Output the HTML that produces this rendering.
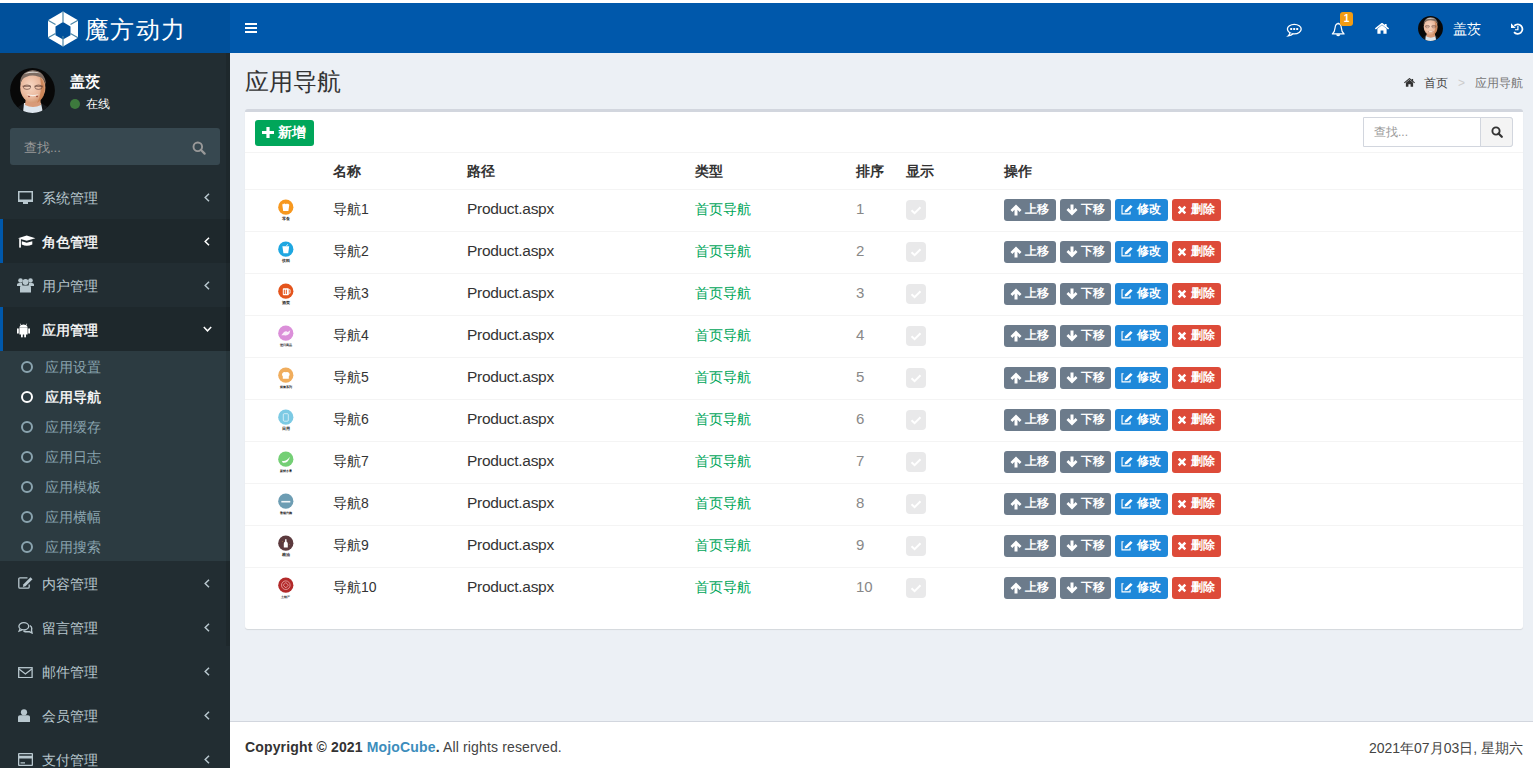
<!DOCTYPE html>
<html><head><meta charset="utf-8">
<style>
*{box-sizing:border-box;margin:0;padding:0}
html,body{width:1533px;height:768px;overflow:hidden}
body{background:#ecf0f5;font-family:"Liberation Sans",sans-serif;font-size:14px;color:#333;position:relative}
.abs{position:absolute}
#strip{left:0;top:0;width:1533px;height:3px;background:#fff}
#logo{left:0;top:3px;width:230px;height:50px;background:#00509b}
#nav{left:230px;top:3px;width:1303px;height:50px;background:#0058ab}
#side{left:0;top:53px;width:230px;height:715px;background:#222d32}
#footer{left:230px;top:721px;width:1303px;height:47px;background:#fff;border-top:1px solid #d2d6de}
svg{display:block}
.t{position:absolute;white-space:nowrap;line-height:1}

.menu{font-size:14px}
.sub{font-size:14px}
.circ{width:12px;height:12px;border:2px solid;border-radius:50%}
.th{font-size:14px;font-weight:bold;color:#333}
.td{font-size:14px;color:#333}
.row{left:0px;width:1278px;height:41px}
.chk{width:20px;height:20px;background:#e9e9ea;border-radius:4px}
.btn{height:22px;border-radius:3px}
.act{-webkit-text-stroke:0.35px #fff}
.bt{position:absolute;top:4px;font-size:12px;font-weight:bold;color:#fff;line-height:1;white-space:nowrap}

</style></head><body>
<div id="strip" class="abs"></div>
<div id="logo" class="abs">
  <svg class="abs" style="left:47px;top:8px" width="32" height="36" viewBox="0 0 32 36">
    <polygon points="16,0.5 31,9.2 31,26.8 16,35.5 1,26.8 1,9.2" fill="#fff"/>
    <polygon points="16,11 23.5,15.4 23.5,24.2 16,28.6 8.5,24.2 8.5,15.4" fill="#00509b"/>
    <g stroke="#4a86a8" stroke-width="1.2">
      <line x1="16" y1="0.5" x2="16" y2="11"/>
      <line x1="31" y1="9.2" x2="23.5" y2="13.6"/>
      <line x1="31" y1="26.8" x2="23.5" y2="22.4"/>
      <line x1="16" y1="35.5" x2="16" y2="25"/>
      <line x1="1" y1="26.8" x2="8.5" y2="22.4"/>
      <line x1="1" y1="9.2" x2="8.5" y2="13.6"/>
    </g>
  </svg>
  <div class="t" style="left:85px;top:15px;font-size:24px;color:#fff;letter-spacing:1.4px">魔方动力</div>
</div>
<div id="side" class="abs">
  <!-- user panel -->
  <svg class="abs" style="left:10px;top:15px" width="45" height="45" viewBox="0 0 45 45"><defs><clipPath id="avc"><circle cx="22.5" cy="22.5" r="22.4"/></clipPath>
<radialGradient id="skin" cx="0.4" cy="0.45" r="0.65"><stop offset="0" stop-color="#f8d8c4"/><stop offset="0.6" stop-color="#eab89c"/><stop offset="1" stop-color="#c88a60"/></radialGradient></defs>
<g clip-path="url(#avc)">
<rect width="45" height="45" fill="#080808"/>
<path d="M4 45 Q8 37 15 35 L30 35 Q38 37 41 45Z" fill="#15181c"/>
<path d="M14 35 L31 35 L33 45 L13 45Z" fill="#dde6ee"/>
<path d="M16 29 L30 29 L31 37 Q23 41 15 37Z" fill="#d89a78"/>
<ellipse cx="22.8" cy="19.5" rx="12.6" ry="15.2" fill="url(#skin)"/>
<path d="M30 8 Q36 16 33.5 28 Q31 33 27 35 Q33 25 30 8Z" fill="#c88050" opacity="0.8"/>
<path d="M10 17 Q9.5 4 22.5 2 Q35.5 3 36 17 Q34 9 28 8.5 Q22 6.5 16 9 Q11.5 10.5 10 17Z" fill="#7d6c62"/>
<path d="M14 6 Q22 1.5 31 5.5 Q24 4 14 6Z" fill="#d8d2cc"/>
<path d="M12.5 18.2 H21 M24.5 18.2 H33" stroke="#6a4a40" stroke-width="0.9"/>
<ellipse cx="17" cy="19.2" rx="3.6" ry="2.2" fill="none" stroke="#6a4a40" stroke-width="0.7"/>
<ellipse cx="28.5" cy="19.2" rx="3.6" ry="2.2" fill="none" stroke="#6a4a40" stroke-width="0.7"/>
<path d="M16.5 26 Q22.8 30.5 29 26 Q22.8 28 16.5 26Z" fill="#f6eee8"/>
<circle cx="19" cy="28.5" r="0.8" fill="#8a3a30"/><circle cx="27" cy="28.5" r="0.8" fill="#8a3a30"/>
</g></svg>
  <div class="t" style="left:70px;top:21px;font-size:15px;font-weight:bold;color:#fff">盖茨</div>
  <div class="abs" style="left:70px;top:46px;width:10px;height:10px;border-radius:50%;background:#3d7a3d"></div>
  <div class="t" style="left:86px;top:45px;font-size:12px;color:#fff">在线</div>
  <!-- search -->
  <div class="abs" style="left:10px;top:75px;width:210px;height:37px;background:#374850;border-radius:3px"></div>
  <div class="t" style="left:24px;top:88px;font-size:13px;color:#999">查找...</div>
  <svg class="abs" style="left:192px;top:88px" width="14" height="14" viewBox="0 0 14 14"><circle cx="5.8" cy="5.8" r="4.3" fill="none" stroke="#999" stroke-width="1.9"/><line x1="8.8" y1="8.8" x2="12.6" y2="12.6" stroke="#999" stroke-width="2.2" stroke-linecap="round"/></svg>
  <!-- menu -->
  <div class="abs" style="left:0;top:166px;width:230px;height:44px;background:#1e282c;border-left:3px solid #0058ab"></div>
  <div class="abs" style="left:0;top:254px;width:230px;height:44px;background:#1e282c;border-left:3px solid #0058ab"></div>
  <div class="abs" style="left:0;top:298px;width:230px;height:210px;background:#2c3b41"></div>

  <svg class="abs" style="left:18px;top:138px" width="16" height="14" viewBox="0 0 16 14"><path d="M0 0H15V11H10V13H5V11H0Z M1.5 1.5V8.5H13.5V1.5Z" fill="#b8c7ce" fill-rule="evenodd"/></svg>
  <div class="t menu" style="left:42px;top:138px;color:#b8c7ce">系统管理</div>
  <svg class="abs ang" style="left:204px;top:140px" width="6" height="9" viewBox="0 0 6 9"><path d="M5 0.8 L1.2 4.5 L5 8.2" fill="none" stroke="#b8c7ce" stroke-width="1.5"/></svg>

  <svg class="abs" style="left:18px;top:182px" width="18" height="13" viewBox="0 0 18 13"><path d="M0 3.2 L8.7 0.6 L17.4 3.2 L8.7 5.8Z" fill="#fff"/><path d="M3.8 6.2 L8.7 7.7 L14.3 6.2 V9.6 Q8.7 12 3.8 9.6Z" fill="#fff"/><rect x="1.2" y="3.6" width="1.7" height="9" fill="#fff"/></svg>
  <div class="t menu act" style="left:42px;top:182px;color:#fff">角色管理</div>
  <svg class="abs ang" style="left:204px;top:184px" width="6" height="9" viewBox="0 0 6 9"><path d="M5 0.8 L1.2 4.5 L5 8.2" fill="none" stroke="#fff" stroke-width="1.5"/></svg>

  <svg class="abs" style="left:17px;top:225px" width="17" height="15" viewBox="0 0 17 15"><circle cx="3.5" cy="2.5" r="2.3" fill="#b8c7ce"/><circle cx="13.5" cy="2.5" r="2.3" fill="#b8c7ce"/><circle cx="8.5" cy="4" r="3" fill="#b8c7ce"/><path d="M0 6.5 Q0 5 2 5 H5 L5.5 8 H0Z M17 6.5 Q17 5 15 5 H12 L11.5 8 H17Z" fill="#b8c7ce"/><path d="M3 9 Q3 7.5 5 7.5 H12 Q14 7.5 14 9 V14.5 H3Z" fill="#b8c7ce"/></svg>
  <div class="t menu" style="left:42px;top:226px;color:#b8c7ce">用户管理</div>
  <svg class="abs ang" style="left:204px;top:228px" width="6" height="9" viewBox="0 0 6 9"><path d="M5 0.8 L1.2 4.5 L5 8.2" fill="none" stroke="#b8c7ce" stroke-width="1.5"/></svg>

  <svg class="abs" style="left:17px;top:270px" width="13" height="15" viewBox="0 0 13 15"><path d="M3.2 0.5 L4.2 2 Q6.5 1 8.8 2 L9.8 0.5 L10.2 0.8 L9.3 2.3 Q10.5 3.2 10.6 4.6 H2.4 Q2.5 3.2 3.7 2.3 L2.8 0.8Z" fill="#fff"/><rect x="2.4" y="4.4" width="8.2" height="7.1" rx="0.5" fill="#fff"/><rect x="0" y="5.2" width="1.8" height="5.5" rx="0.9" fill="#fff"/><rect x="11.2" y="5.2" width="1.8" height="5.5" rx="0.9" fill="#fff"/><rect x="4" y="10.5" width="1.8" height="4" rx="0.8" fill="#fff"/><rect x="7.2" y="10.5" width="1.8" height="4" rx="0.8" fill="#fff"/></svg>
  <div class="t menu act" style="left:42px;top:270px;color:#fff">应用管理</div>
  <svg class="abs" style="left:203px;top:273px" width="9" height="6" viewBox="0 0 9 6"><path d="M0.8 1 L4.5 4.8 L8.2 1" fill="none" stroke="#fff" stroke-width="1.5"/></svg>

  <!-- submenu -->
  <div class="abs circ" style="left:21px;top:308px;border-color:#8aa4af"></div>
  <div class="t sub" style="left:45px;top:307px;color:#8aa4af">应用设置</div>
  <div class="abs circ" style="left:21px;top:338px;border-color:#fff"></div>
  <div class="t sub act" style="left:45px;top:337px;color:#fff">应用导航</div>
  <div class="abs circ" style="left:21px;top:368px;border-color:#8aa4af"></div>
  <div class="t sub" style="left:45px;top:367px;color:#8aa4af">应用缓存</div>
  <div class="abs circ" style="left:21px;top:398px;border-color:#8aa4af"></div>
  <div class="t sub" style="left:45px;top:397px;color:#8aa4af">应用日志</div>
  <div class="abs circ" style="left:21px;top:428px;border-color:#8aa4af"></div>
  <div class="t sub" style="left:45px;top:427px;color:#8aa4af">应用模板</div>
  <div class="abs circ" style="left:21px;top:458px;border-color:#8aa4af"></div>
  <div class="t sub" style="left:45px;top:457px;color:#8aa4af">应用横幅</div>
  <div class="abs circ" style="left:21px;top:488px;border-color:#8aa4af"></div>
  <div class="t sub" style="left:45px;top:487px;color:#8aa4af">应用搜索</div>

  <svg class="abs" style="left:18px;top:524px" width="15" height="12" viewBox="0 0 15 12"><path d="M9.5 0.8 H2 Q0.8 0.8 0.8 2 V10 Q0.8 11.2 2 11.2 H10 Q11.2 11.2 11.2 10 V7.5" fill="none" stroke="#b8c7ce" stroke-width="1.3"/><path d="M12.5 0.3 L14.5 2.3 L7.5 9.3 L4.8 10 L5.5 7.3Z" fill="#b8c7ce"/></svg>
  <div class="t menu" style="left:42px;top:524px;color:#b8c7ce">内容管理</div>
  <svg class="abs ang" style="left:204px;top:526px" width="6" height="9" viewBox="0 0 6 9"><path d="M5 0.8 L1.2 4.5 L5 8.2" fill="none" stroke="#b8c7ce" stroke-width="1.5"/></svg>

  <svg class="abs" style="left:18px;top:569px" width="15" height="12" viewBox="0 0 15 12"><ellipse cx="5.8" cy="4.3" rx="4.9" ry="3.6" fill="none" stroke="#b8c7ce" stroke-width="1.3"/><path d="M2 7 L1 9.2 L4 8" fill="none" stroke="#b8c7ce" stroke-width="1.2"/><path d="M11.8 3.5 Q14.5 5 13.5 8 L14 11 L11 9.6 Q8 10.2 5.5 9" fill="none" stroke="#b8c7ce" stroke-width="1.4"/></svg>
  <div class="t menu" style="left:42px;top:568px;color:#b8c7ce">留言管理</div>
  <svg class="abs ang" style="left:204px;top:570px" width="6" height="9" viewBox="0 0 6 9"><path d="M5 0.8 L1.2 4.5 L5 8.2" fill="none" stroke="#b8c7ce" stroke-width="1.5"/></svg>

  <svg class="abs" style="left:18px;top:614px" width="15" height="11" viewBox="0 0 15 11"><rect x="0.7" y="0.7" width="13.4" height="9.9" fill="none" stroke="#b8c7ce" stroke-width="1.3"/><path d="M1 2 L7.4 7 L13.8 2" fill="none" stroke="#b8c7ce" stroke-width="1.3"/></svg>
  <div class="t menu" style="left:42px;top:612px;color:#b8c7ce">邮件管理</div>
  <svg class="abs ang" style="left:204px;top:614px" width="6" height="9" viewBox="0 0 6 9"><path d="M5 0.8 L1.2 4.5 L5 8.2" fill="none" stroke="#b8c7ce" stroke-width="1.5"/></svg>

  <svg class="abs" style="left:18px;top:656px" width="12" height="13" viewBox="0 0 12 13"><circle cx="6" cy="3.3" r="3.1" fill="#b8c7ce"/><path d="M0 8 Q0 6.3 2 6.3 H10 Q12 6.3 12 8 V12.5 Q12 13 11.5 13 H0.5 Q0 13 0 12.5Z" fill="#b8c7ce"/></svg>
  <div class="t menu" style="left:42px;top:656px;color:#b8c7ce">会员管理</div>
  <svg class="abs ang" style="left:204px;top:658px" width="6" height="9" viewBox="0 0 6 9"><path d="M5 0.8 L1.2 4.5 L5 8.2" fill="none" stroke="#b8c7ce" stroke-width="1.5"/></svg>

  <svg class="abs" style="left:18px;top:700px" width="15" height="13" viewBox="0 0 15 13"><path d="M1 0 H14 Q15 0 15 1 V12 Q15 13 14 13 H1 Q0 13 0 12 V1 Q0 0 1 0Z M1.3 1.3 V2.8 H13.7 V1.3Z M1.3 5.5 V11.7 H13.7 V5.5Z M2.5 9.3 H7 V10.5 H2.5Z" fill="#b8c7ce" fill-rule="evenodd"/></svg>
  <div class="t menu" style="left:42px;top:700px;color:#b8c7ce">支付管理</div>
  <svg class="abs ang" style="left:204px;top:702px" width="6" height="9" viewBox="0 0 6 9"><path d="M5 0.8 L1.2 4.5 L5 8.2" fill="none" stroke="#b8c7ce" stroke-width="1.5"/></svg>
  <div class="abs" style="left:226px;top:0;width:4px;height:593px;background:rgba(0,0,0,0.1)"></div>
</div>
<div id="nav" class="abs">
  <div class="abs" style="left:15px;top:20px;width:12px;height:2px;background:#fff"></div>
  <div class="abs" style="left:15px;top:24px;width:12px;height:2px;background:#fff"></div>
  <div class="abs" style="left:15px;top:28px;width:12px;height:2px;background:#fff"></div>
  <!-- chat -->
  <svg class="abs" style="left:1056px;top:20px" width="16" height="14" viewBox="0 0 16 14"><ellipse cx="8.3" cy="6.1" rx="6.9" ry="4.8" fill="none" stroke="#fff" stroke-width="1.3"/><path d="M4 9.9 Q3.8 11.6 2.2 12.9 Q5.4 12.6 7 10.8" fill="#0058ab" stroke="#fff" stroke-width="1.3"/><rect x="4.2" y="5.1" width="2" height="2" rx="0.5" fill="#fff"/><rect x="7.2" y="5.1" width="2" height="2" rx="0.5" fill="#fff"/><rect x="10.2" y="5.1" width="2" height="2" rx="0.5" fill="#fff"/></svg>
  <!-- bell -->
  <svg class="abs" style="left:1101px;top:19px" width="15" height="16" viewBox="0 0 15 16"><path d="M7.2 1.6 Q4.4 1.8 4.1 5.6 Q3.9 9.8 1.3 11.9 H13.1 Q10.5 9.8 10.3 5.6 Q10 1.8 7.2 1.6Z" fill="none" stroke="#fff" stroke-width="1.2" stroke-linejoin="round"/><path d="M5.3 12.3 H9.1 V13.2 Q7.2 15.2 5.3 13.2Z" fill="#fff"/><rect x="6.7" y="0.6" width="1" height="1.3" fill="#fff"/></svg>
  <div class="abs" style="left:1110px;top:9px;width:13px;height:14px;background:#f39c12;border-radius:3px;color:#fff;font-size:10px;font-weight:bold;text-align:center;line-height:14px">1</div>
  <!-- home -->
  <svg class="abs" style="left:1145px;top:20px" width="14" height="11" viewBox="0 0 14 11"><path d="M7 2 L2.4 5.8 V10.8 H5.6 V7.6 H8.4 V10.8 H11.6 V5.8Z" fill="#fff"/><path d="M0.4 6 L7 0.6 L13.6 6" fill="none" stroke="#fff" stroke-width="1.5"/><rect x="9.8" y="1" width="1.8" height="3" fill="#fff"/></svg>
  <!-- avatar -->
  <svg class="abs" style="left:1188px;top:13px" width="25" height="25" viewBox="0 0 45 45"><defs><clipPath id="avc2"><circle cx="22.5" cy="22.5" r="22.4"/></clipPath>
<radialGradient id="skin2" cx="0.4" cy="0.45" r="0.65"><stop offset="0" stop-color="#f8d8c4"/><stop offset="0.6" stop-color="#eab89c"/><stop offset="1" stop-color="#c88a60"/></radialGradient></defs>
<g clip-path="url(#avc2)">
<rect width="45" height="45" fill="#080808"/>
<path d="M4 45 Q8 37 15 35 L30 35 Q38 37 41 45Z" fill="#15181c"/>
<path d="M14 35 L31 35 L33 45 L13 45Z" fill="#dde6ee"/>
<path d="M16 29 L30 29 L31 37 Q23 41 15 37Z" fill="#d89a78"/>
<ellipse cx="22.8" cy="19.5" rx="12.6" ry="15.2" fill="url(#skin2)"/>
<path d="M30 8 Q36 16 33.5 28 Q31 33 27 35 Q33 25 30 8Z" fill="#c88050" opacity="0.8"/>
<path d="M10 17 Q9.5 4 22.5 2 Q35.5 3 36 17 Q34 9 28 8.5 Q22 6.5 16 9 Q11.5 10.5 10 17Z" fill="#7d6c62"/>
<path d="M14 6 Q22 1.5 31 5.5 Q24 4 14 6Z" fill="#d8d2cc"/>
<path d="M12.5 18.2 H21 M24.5 18.2 H33" stroke="#6a4a40" stroke-width="0.9"/>
<ellipse cx="17" cy="19.2" rx="3.6" ry="2.2" fill="none" stroke="#6a4a40" stroke-width="0.7"/>
<ellipse cx="28.5" cy="19.2" rx="3.6" ry="2.2" fill="none" stroke="#6a4a40" stroke-width="0.7"/>
<path d="M16.5 26 Q22.8 30.5 29 26 Q22.8 28 16.5 26Z" fill="#f6eee8"/>
<circle cx="19" cy="28.5" r="0.8" fill="#8a3a30"/><circle cx="27" cy="28.5" r="0.8" fill="#8a3a30"/>
</g></svg>
  <div class="t" style="left:1223px;top:19px;font-size:14px;color:#fff">盖茨</div>
  <!-- history -->
  <svg class="abs" style="left:1280px;top:18px" width="15" height="16" viewBox="0 0 15 16"><path d="M4.34 4.74 A4.75 4.75 0 1 1 4.06 11.15" fill="none" stroke="#fff" stroke-width="1.8"/><path d="M1 2.2 V6.9 H5.7Z" fill="#fff"/><path d="M7.9 5 V8.75 H5" fill="none" stroke="#fff" stroke-width="1.2"/></svg>
</div>
<div id="content" class="abs" style="left:230px;top:53px;width:1303px;height:667px">
  <div class="t" style="left:15px;top:17px;font-size:24px;color:#333">应用导航</div>
  <!-- breadcrumb -->
  <svg class="abs" style="left:1174px;top:25px" width="11" height="9" viewBox="0 0 14 11"><path d="M7 2 L2.4 5.8 V10.8 H5.6 V7.6 H8.4 V10.8 H11.6 V5.8Z" fill="#333"/><path d="M0.4 6 L7 0.6 L13.6 6" fill="none" stroke="#333" stroke-width="1.5"/><rect x="9.8" y="1" width="1.8" height="3" fill="#333"/></svg>
  <div class="t" style="left:1194px;top:24px;font-size:12px;color:#444">首页</div>
  <div class="t" style="left:1228px;top:24px;font-size:12px;color:#ccc">&gt;</div>
  <div class="t" style="left:1245px;top:24px;font-size:12px;color:#777">应用导航</div>
  <!-- box -->
  <div class="abs" style="left:15px;top:56px;width:1278px;height:520px;background:#fff;border-top:3px solid #d2d6de;border-radius:3px;box-shadow:0 1px 1px rgba(0,0,0,0.1)"></div>
  <div class="abs" style="left:25px;top:67px;width:59px;height:26px;background:#00a65a;border-radius:3px"></div>
  <svg class="abs" style="left:32px;top:74px" width="12" height="11" viewBox="0 0 12 11"><path d="M4.4 0 H7.6 V3.9 H12 V7.1 H7.6 V11 H4.4 V7.1 H0 V3.9 H4.4Z" fill="#fff"/></svg>
  <div class="t" style="left:48px;top:72px;font-size:14px;font-weight:bold;color:#fff">新增</div>
  <!-- search -->
  <div class="abs" style="left:1133px;top:64px;width:150px;height:30px;border:1px solid #d2d6de;border-radius:0 3px 3px 0;background:#fff"></div>
  <div class="abs" style="left:1250px;top:64px;width:33px;height:30px;border:1px solid #d2d6de;border-radius:0 3px 3px 0;background:#f4f4f4"></div>
  <div class="t" style="left:1144px;top:73px;font-size:12px;color:#999">查找...</div>
  <svg class="abs" style="left:1261px;top:73px" width="12" height="12" viewBox="0 0 12 12"><circle cx="5" cy="5" r="3.6" fill="none" stroke="#333" stroke-width="1.9"/><line x1="7.5" y1="7.5" x2="10.8" y2="10.8" stroke="#333" stroke-width="2.2" stroke-linecap="round"/></svg>
  <div class="abs" style="left:15px;top:99px;width:1278px;height:1px;background:#f4f4f4"></div>
<div class="abs" style="left:15px;top:136px;width:1278px;height:1px;background:#f4f4f4"></div>
<div class="t th" style="left:103px;top:111px">名称</div>
<div class="t th" style="left:237px;top:111px">路径</div>
<div class="t th" style="left:465px;top:111px">类型</div>
<div class="t th" style="left:626px;top:111px">排序</div>
<div class="t th" style="left:676px;top:111px">显示</div>
<div class="t th" style="left:774px;top:111px">操作</div>
<div class="abs row" style="top:137px">
<svg class="abs" style="left:46px;top:9px" width="20" height="24" viewBox="0 0 20 24"><circle cx="9.8" cy="8.2" r="7.6" fill="#f7981f"/><g transform="translate(-0.2,0.7)"><path d="M6.5 5 L7.2 3.8 L8 4.6 L8.8 3.5 L9.6 4.6 L10.4 3.8 L11.2 4.6 L12 3.8 L13.5 5 L12.6 11.3 H7.4Z" fill="#fff"/></g><text x="9.8" y="21.3" font-size="3.8" text-anchor="middle" fill="#222" font-weight="bold" font-family="Liberation Sans">零食</text></svg>
<div class="t td" style="left:103px;top:12px">导航1</div>
<div class="t td" style="left:237px;top:10.5px;font-size:15.5px;letter-spacing:-0.3px">Product.aspx</div>
<div class="t td" style="left:465px;top:12px;color:#00a65a">首页导航</div>
<div class="t td" style="left:626px;top:11px;font-size:15px;color:#888">1</div>
<div class="abs chk" style="left:676px;top:10px"><svg width="20" height="20" viewBox="0 0 20 20"><path d="M5.5 10.2 L8.6 13.2 L14.5 7.3" fill="none" stroke="#fff" stroke-width="2"/></svg></div>
<div class="abs btn" style="left:774px;top:9px;width:52px;background:#6c7b8b"><svg class="abs" style="left:6px;top:5px" width="12" height="12" viewBox="0 0 12 12"><path d="M6 0.5 L11.5 6 L9.6 7.9 L7.5 5.8 V11.5 H4.5 V5.8 L2.4 7.9 L0.5 6Z" fill="#fff"/></svg><span class="bt" style="left:21px">上移</span></div>
<div class="abs btn" style="left:830px;top:9px;width:51px;background:#6c7b8b"><svg class="abs" style="left:6px;top:5px" width="12" height="12" viewBox="0 0 12 12"><path d="M6 11.5 L11.5 6 L9.6 4.1 L7.5 6.2 V0.5 H4.5 V6.2 L2.4 4.1 L0.5 6Z" fill="#fff"/></svg><span class="bt" style="left:21px">下移</span></div>
<div class="abs btn" style="left:885px;top:9px;width:53px;background:#1f88d9"><svg class="abs" style="left:6px;top:5px" width="13" height="12" viewBox="0 0 13 12"><path d="M2.6 1.7 H1 V9.9 H9.1 V7.6" fill="none" stroke="#fff" stroke-width="1.1"/><path d="M3.6 8.4 L4.2 6.2 L9.6 0.9 L11.6 2.7 L6.1 8Z" fill="#fff"/></svg><span class="bt" style="left:22px">修改</span></div>
<div class="abs btn" style="left:942px;top:9px;width:49px;background:#dd4b39"><svg class="abs" style="left:5px;top:6px" width="10" height="10" viewBox="0 0 10 10"><path d="M0.8 2.6 L2.6 0.8 L5 3.2 L7.4 0.8 L9.2 2.6 L6.8 5 L9.2 7.4 L7.4 9.2 L5 6.8 L2.6 9.2 L0.8 7.4 L3.2 5Z" fill="#fff"/></svg><span class="bt" style="left:19px">删除</span></div>
</div>
<div class="abs" style="left:15px;top:178px;width:1278px;height:1px;background:#f4f4f4"></div>
<div class="abs row" style="top:179px">
<svg class="abs" style="left:46px;top:9px" width="20" height="24" viewBox="0 0 20 24"><circle cx="9.8" cy="8.2" r="7.6" fill="#1ea7e1"/><g transform="translate(-0.2,0.7)"><path d="M6.6 4.5 H13.4 L12.4 11.5 H7.6Z" fill="#fff"/><line x1="10.5" y1="4.5" x2="12" y2="2.5" stroke="#fff" stroke-width="0.8"/></g><text x="9.8" y="21.3" font-size="3.8" text-anchor="middle" fill="#222" font-weight="bold" font-family="Liberation Sans">饮料</text></svg>
<div class="t td" style="left:103px;top:12px">导航2</div>
<div class="t td" style="left:237px;top:10.5px;font-size:15.5px;letter-spacing:-0.3px">Product.aspx</div>
<div class="t td" style="left:465px;top:12px;color:#00a65a">首页导航</div>
<div class="t td" style="left:626px;top:11px;font-size:15px;color:#888">2</div>
<div class="abs chk" style="left:676px;top:10px"><svg width="20" height="20" viewBox="0 0 20 20"><path d="M5.5 10.2 L8.6 13.2 L14.5 7.3" fill="none" stroke="#fff" stroke-width="2"/></svg></div>
<div class="abs btn" style="left:774px;top:9px;width:52px;background:#6c7b8b"><svg class="abs" style="left:6px;top:5px" width="12" height="12" viewBox="0 0 12 12"><path d="M6 0.5 L11.5 6 L9.6 7.9 L7.5 5.8 V11.5 H4.5 V5.8 L2.4 7.9 L0.5 6Z" fill="#fff"/></svg><span class="bt" style="left:21px">上移</span></div>
<div class="abs btn" style="left:830px;top:9px;width:51px;background:#6c7b8b"><svg class="abs" style="left:6px;top:5px" width="12" height="12" viewBox="0 0 12 12"><path d="M6 11.5 L11.5 6 L9.6 4.1 L7.5 6.2 V0.5 H4.5 V6.2 L2.4 4.1 L0.5 6Z" fill="#fff"/></svg><span class="bt" style="left:21px">下移</span></div>
<div class="abs btn" style="left:885px;top:9px;width:53px;background:#1f88d9"><svg class="abs" style="left:6px;top:5px" width="13" height="12" viewBox="0 0 13 12"><path d="M2.6 1.7 H1 V9.9 H9.1 V7.6" fill="none" stroke="#fff" stroke-width="1.1"/><path d="M3.6 8.4 L4.2 6.2 L9.6 0.9 L11.6 2.7 L6.1 8Z" fill="#fff"/></svg><span class="bt" style="left:22px">修改</span></div>
<div class="abs btn" style="left:942px;top:9px;width:49px;background:#dd4b39"><svg class="abs" style="left:5px;top:6px" width="10" height="10" viewBox="0 0 10 10"><path d="M0.8 2.6 L2.6 0.8 L5 3.2 L7.4 0.8 L9.2 2.6 L6.8 5 L9.2 7.4 L7.4 9.2 L5 6.8 L2.6 9.2 L0.8 7.4 L3.2 5Z" fill="#fff"/></svg><span class="bt" style="left:19px">删除</span></div>
</div>
<div class="abs" style="left:15px;top:220px;width:1278px;height:1px;background:#f4f4f4"></div>
<div class="abs row" style="top:221px">
<svg class="abs" style="left:46px;top:9px" width="20" height="24" viewBox="0 0 20 24"><circle cx="9.8" cy="8.2" r="7.6" fill="#e4541c"/><g transform="translate(-0.2,0.7)"><rect x="7" y="4.5" width="6" height="7" rx="0.8" fill="#fff"/><rect x="8" y="6" width="1" height="4.3" fill="#e4541c"/><rect x="10" y="6" width="1" height="4.3" fill="#e4541c"/><path d="M13 6 h1.3 v3.5 h-1.3" fill="none" stroke="#fff" stroke-width="0.8"/></g><text x="9.8" y="21.3" font-size="3.8" text-anchor="middle" fill="#222" font-weight="bold" font-family="Liberation Sans">酒类</text></svg>
<div class="t td" style="left:103px;top:12px">导航3</div>
<div class="t td" style="left:237px;top:10.5px;font-size:15.5px;letter-spacing:-0.3px">Product.aspx</div>
<div class="t td" style="left:465px;top:12px;color:#00a65a">首页导航</div>
<div class="t td" style="left:626px;top:11px;font-size:15px;color:#888">3</div>
<div class="abs chk" style="left:676px;top:10px"><svg width="20" height="20" viewBox="0 0 20 20"><path d="M5.5 10.2 L8.6 13.2 L14.5 7.3" fill="none" stroke="#fff" stroke-width="2"/></svg></div>
<div class="abs btn" style="left:774px;top:9px;width:52px;background:#6c7b8b"><svg class="abs" style="left:6px;top:5px" width="12" height="12" viewBox="0 0 12 12"><path d="M6 0.5 L11.5 6 L9.6 7.9 L7.5 5.8 V11.5 H4.5 V5.8 L2.4 7.9 L0.5 6Z" fill="#fff"/></svg><span class="bt" style="left:21px">上移</span></div>
<div class="abs btn" style="left:830px;top:9px;width:51px;background:#6c7b8b"><svg class="abs" style="left:6px;top:5px" width="12" height="12" viewBox="0 0 12 12"><path d="M6 11.5 L11.5 6 L9.6 4.1 L7.5 6.2 V0.5 H4.5 V6.2 L2.4 4.1 L0.5 6Z" fill="#fff"/></svg><span class="bt" style="left:21px">下移</span></div>
<div class="abs btn" style="left:885px;top:9px;width:53px;background:#1f88d9"><svg class="abs" style="left:6px;top:5px" width="13" height="12" viewBox="0 0 13 12"><path d="M2.6 1.7 H1 V9.9 H9.1 V7.6" fill="none" stroke="#fff" stroke-width="1.1"/><path d="M3.6 8.4 L4.2 6.2 L9.6 0.9 L11.6 2.7 L6.1 8Z" fill="#fff"/></svg><span class="bt" style="left:22px">修改</span></div>
<div class="abs btn" style="left:942px;top:9px;width:49px;background:#dd4b39"><svg class="abs" style="left:5px;top:6px" width="10" height="10" viewBox="0 0 10 10"><path d="M0.8 2.6 L2.6 0.8 L5 3.2 L7.4 0.8 L9.2 2.6 L6.8 5 L9.2 7.4 L7.4 9.2 L5 6.8 L2.6 9.2 L0.8 7.4 L3.2 5Z" fill="#fff"/></svg><span class="bt" style="left:19px">删除</span></div>
</div>
<div class="abs" style="left:15px;top:262px;width:1278px;height:1px;background:#f4f4f4"></div>
<div class="abs row" style="top:263px">
<svg class="abs" style="left:46px;top:9px" width="20" height="24" viewBox="0 0 20 24"><circle cx="9.8" cy="8.2" r="7.6" fill="#db8fd9"/><g transform="translate(-0.2,0.7)"><path d="M5.5 9.5 L8 6.5 Q10 5 12 6.2 L14.5 4.5 L13.5 8 Q11 10.5 8.5 9.5Z" fill="#fff" opacity="0.85"/></g><text x="9.8" y="21.3" font-size="3.3" text-anchor="middle" fill="#222" font-weight="bold" font-family="Liberation Sans">进口商品</text></svg>
<div class="t td" style="left:103px;top:12px">导航4</div>
<div class="t td" style="left:237px;top:10.5px;font-size:15.5px;letter-spacing:-0.3px">Product.aspx</div>
<div class="t td" style="left:465px;top:12px;color:#00a65a">首页导航</div>
<div class="t td" style="left:626px;top:11px;font-size:15px;color:#888">4</div>
<div class="abs chk" style="left:676px;top:10px"><svg width="20" height="20" viewBox="0 0 20 20"><path d="M5.5 10.2 L8.6 13.2 L14.5 7.3" fill="none" stroke="#fff" stroke-width="2"/></svg></div>
<div class="abs btn" style="left:774px;top:9px;width:52px;background:#6c7b8b"><svg class="abs" style="left:6px;top:5px" width="12" height="12" viewBox="0 0 12 12"><path d="M6 0.5 L11.5 6 L9.6 7.9 L7.5 5.8 V11.5 H4.5 V5.8 L2.4 7.9 L0.5 6Z" fill="#fff"/></svg><span class="bt" style="left:21px">上移</span></div>
<div class="abs btn" style="left:830px;top:9px;width:51px;background:#6c7b8b"><svg class="abs" style="left:6px;top:5px" width="12" height="12" viewBox="0 0 12 12"><path d="M6 11.5 L11.5 6 L9.6 4.1 L7.5 6.2 V0.5 H4.5 V6.2 L2.4 4.1 L0.5 6Z" fill="#fff"/></svg><span class="bt" style="left:21px">下移</span></div>
<div class="abs btn" style="left:885px;top:9px;width:53px;background:#1f88d9"><svg class="abs" style="left:6px;top:5px" width="13" height="12" viewBox="0 0 13 12"><path d="M2.6 1.7 H1 V9.9 H9.1 V7.6" fill="none" stroke="#fff" stroke-width="1.1"/><path d="M3.6 8.4 L4.2 6.2 L9.6 0.9 L11.6 2.7 L6.1 8Z" fill="#fff"/></svg><span class="bt" style="left:22px">修改</span></div>
<div class="abs btn" style="left:942px;top:9px;width:49px;background:#dd4b39"><svg class="abs" style="left:5px;top:6px" width="10" height="10" viewBox="0 0 10 10"><path d="M0.8 2.6 L2.6 0.8 L5 3.2 L7.4 0.8 L9.2 2.6 L6.8 5 L9.2 7.4 L7.4 9.2 L5 6.8 L2.6 9.2 L0.8 7.4 L3.2 5Z" fill="#fff"/></svg><span class="bt" style="left:19px">删除</span></div>
</div>
<div class="abs" style="left:15px;top:304px;width:1278px;height:1px;background:#f4f4f4"></div>
<div class="abs row" style="top:305px">
<svg class="abs" style="left:46px;top:9px" width="20" height="24" viewBox="0 0 20 24"><circle cx="9.8" cy="8.2" r="7.6" fill="#f0ad5d"/><g transform="translate(-0.2,0.7)"><path d="M7 11 V8.5 Q5.5 7.5 6.5 5.5 Q8 3.8 10 4.5 Q12 3.8 13.5 5.5 Q14.5 7.5 13 8.5 V11Z" fill="#fff"/></g><text x="9.8" y="21.3" font-size="3.3" text-anchor="middle" fill="#222" font-weight="bold" font-family="Liberation Sans">烘焙系列</text></svg>
<div class="t td" style="left:103px;top:12px">导航5</div>
<div class="t td" style="left:237px;top:10.5px;font-size:15.5px;letter-spacing:-0.3px">Product.aspx</div>
<div class="t td" style="left:465px;top:12px;color:#00a65a">首页导航</div>
<div class="t td" style="left:626px;top:11px;font-size:15px;color:#888">5</div>
<div class="abs chk" style="left:676px;top:10px"><svg width="20" height="20" viewBox="0 0 20 20"><path d="M5.5 10.2 L8.6 13.2 L14.5 7.3" fill="none" stroke="#fff" stroke-width="2"/></svg></div>
<div class="abs btn" style="left:774px;top:9px;width:52px;background:#6c7b8b"><svg class="abs" style="left:6px;top:5px" width="12" height="12" viewBox="0 0 12 12"><path d="M6 0.5 L11.5 6 L9.6 7.9 L7.5 5.8 V11.5 H4.5 V5.8 L2.4 7.9 L0.5 6Z" fill="#fff"/></svg><span class="bt" style="left:21px">上移</span></div>
<div class="abs btn" style="left:830px;top:9px;width:51px;background:#6c7b8b"><svg class="abs" style="left:6px;top:5px" width="12" height="12" viewBox="0 0 12 12"><path d="M6 11.5 L11.5 6 L9.6 4.1 L7.5 6.2 V0.5 H4.5 V6.2 L2.4 4.1 L0.5 6Z" fill="#fff"/></svg><span class="bt" style="left:21px">下移</span></div>
<div class="abs btn" style="left:885px;top:9px;width:53px;background:#1f88d9"><svg class="abs" style="left:6px;top:5px" width="13" height="12" viewBox="0 0 13 12"><path d="M2.6 1.7 H1 V9.9 H9.1 V7.6" fill="none" stroke="#fff" stroke-width="1.1"/><path d="M3.6 8.4 L4.2 6.2 L9.6 0.9 L11.6 2.7 L6.1 8Z" fill="#fff"/></svg><span class="bt" style="left:22px">修改</span></div>
<div class="abs btn" style="left:942px;top:9px;width:49px;background:#dd4b39"><svg class="abs" style="left:5px;top:6px" width="10" height="10" viewBox="0 0 10 10"><path d="M0.8 2.6 L2.6 0.8 L5 3.2 L7.4 0.8 L9.2 2.6 L6.8 5 L9.2 7.4 L7.4 9.2 L5 6.8 L2.6 9.2 L0.8 7.4 L3.2 5Z" fill="#fff"/></svg><span class="bt" style="left:19px">删除</span></div>
</div>
<div class="abs" style="left:15px;top:346px;width:1278px;height:1px;background:#f4f4f4"></div>
<div class="abs row" style="top:347px">
<svg class="abs" style="left:46px;top:9px" width="20" height="24" viewBox="0 0 20 24"><circle cx="9.8" cy="8.2" r="7.6" fill="#7ccae4"/><g transform="translate(-0.2,0.7)"><rect x="7.5" y="4" width="5" height="7.5" rx="1" fill="none" stroke="#fff" stroke-width="0.8" opacity="0.8"/></g><text x="9.8" y="21.3" font-size="3.8" text-anchor="middle" fill="#222" font-weight="bold" font-family="Liberation Sans">日用</text></svg>
<div class="t td" style="left:103px;top:12px">导航6</div>
<div class="t td" style="left:237px;top:10.5px;font-size:15.5px;letter-spacing:-0.3px">Product.aspx</div>
<div class="t td" style="left:465px;top:12px;color:#00a65a">首页导航</div>
<div class="t td" style="left:626px;top:11px;font-size:15px;color:#888">6</div>
<div class="abs chk" style="left:676px;top:10px"><svg width="20" height="20" viewBox="0 0 20 20"><path d="M5.5 10.2 L8.6 13.2 L14.5 7.3" fill="none" stroke="#fff" stroke-width="2"/></svg></div>
<div class="abs btn" style="left:774px;top:9px;width:52px;background:#6c7b8b"><svg class="abs" style="left:6px;top:5px" width="12" height="12" viewBox="0 0 12 12"><path d="M6 0.5 L11.5 6 L9.6 7.9 L7.5 5.8 V11.5 H4.5 V5.8 L2.4 7.9 L0.5 6Z" fill="#fff"/></svg><span class="bt" style="left:21px">上移</span></div>
<div class="abs btn" style="left:830px;top:9px;width:51px;background:#6c7b8b"><svg class="abs" style="left:6px;top:5px" width="12" height="12" viewBox="0 0 12 12"><path d="M6 11.5 L11.5 6 L9.6 4.1 L7.5 6.2 V0.5 H4.5 V6.2 L2.4 4.1 L0.5 6Z" fill="#fff"/></svg><span class="bt" style="left:21px">下移</span></div>
<div class="abs btn" style="left:885px;top:9px;width:53px;background:#1f88d9"><svg class="abs" style="left:6px;top:5px" width="13" height="12" viewBox="0 0 13 12"><path d="M2.6 1.7 H1 V9.9 H9.1 V7.6" fill="none" stroke="#fff" stroke-width="1.1"/><path d="M3.6 8.4 L4.2 6.2 L9.6 0.9 L11.6 2.7 L6.1 8Z" fill="#fff"/></svg><span class="bt" style="left:22px">修改</span></div>
<div class="abs btn" style="left:942px;top:9px;width:49px;background:#dd4b39"><svg class="abs" style="left:5px;top:6px" width="10" height="10" viewBox="0 0 10 10"><path d="M0.8 2.6 L2.6 0.8 L5 3.2 L7.4 0.8 L9.2 2.6 L6.8 5 L9.2 7.4 L7.4 9.2 L5 6.8 L2.6 9.2 L0.8 7.4 L3.2 5Z" fill="#fff"/></svg><span class="bt" style="left:19px">删除</span></div>
</div>
<div class="abs" style="left:15px;top:388px;width:1278px;height:1px;background:#f4f4f4"></div>
<div class="abs row" style="top:389px">
<svg class="abs" style="left:46px;top:9px" width="20" height="24" viewBox="0 0 20 24"><circle cx="9.8" cy="8.2" r="7.6" fill="#74cf75"/><g transform="translate(-0.2,0.7)"><path d="M6 9 Q10 10.5 14 5 Q13 11.5 7 11Z" fill="#fff"/></g><text x="9.8" y="21.3" font-size="3.3" text-anchor="middle" fill="#222" font-weight="bold" font-family="Liberation Sans">新鲜水果</text></svg>
<div class="t td" style="left:103px;top:12px">导航7</div>
<div class="t td" style="left:237px;top:10.5px;font-size:15.5px;letter-spacing:-0.3px">Product.aspx</div>
<div class="t td" style="left:465px;top:12px;color:#00a65a">首页导航</div>
<div class="t td" style="left:626px;top:11px;font-size:15px;color:#888">7</div>
<div class="abs chk" style="left:676px;top:10px"><svg width="20" height="20" viewBox="0 0 20 20"><path d="M5.5 10.2 L8.6 13.2 L14.5 7.3" fill="none" stroke="#fff" stroke-width="2"/></svg></div>
<div class="abs btn" style="left:774px;top:9px;width:52px;background:#6c7b8b"><svg class="abs" style="left:6px;top:5px" width="12" height="12" viewBox="0 0 12 12"><path d="M6 0.5 L11.5 6 L9.6 7.9 L7.5 5.8 V11.5 H4.5 V5.8 L2.4 7.9 L0.5 6Z" fill="#fff"/></svg><span class="bt" style="left:21px">上移</span></div>
<div class="abs btn" style="left:830px;top:9px;width:51px;background:#6c7b8b"><svg class="abs" style="left:6px;top:5px" width="12" height="12" viewBox="0 0 12 12"><path d="M6 11.5 L11.5 6 L9.6 4.1 L7.5 6.2 V0.5 H4.5 V6.2 L2.4 4.1 L0.5 6Z" fill="#fff"/></svg><span class="bt" style="left:21px">下移</span></div>
<div class="abs btn" style="left:885px;top:9px;width:53px;background:#1f88d9"><svg class="abs" style="left:6px;top:5px" width="13" height="12" viewBox="0 0 13 12"><path d="M2.6 1.7 H1 V9.9 H9.1 V7.6" fill="none" stroke="#fff" stroke-width="1.1"/><path d="M3.6 8.4 L4.2 6.2 L9.6 0.9 L11.6 2.7 L6.1 8Z" fill="#fff"/></svg><span class="bt" style="left:22px">修改</span></div>
<div class="abs btn" style="left:942px;top:9px;width:49px;background:#dd4b39"><svg class="abs" style="left:5px;top:6px" width="10" height="10" viewBox="0 0 10 10"><path d="M0.8 2.6 L2.6 0.8 L5 3.2 L7.4 0.8 L9.2 2.6 L6.8 5 L9.2 7.4 L7.4 9.2 L5 6.8 L2.6 9.2 L0.8 7.4 L3.2 5Z" fill="#fff"/></svg><span class="bt" style="left:19px">删除</span></div>
</div>
<div class="abs" style="left:15px;top:430px;width:1278px;height:1px;background:#f4f4f4"></div>
<div class="abs row" style="top:431px">
<svg class="abs" style="left:46px;top:9px" width="20" height="24" viewBox="0 0 20 24"><circle cx="9.8" cy="8.2" r="7.6" fill="#6d9db3"/><g transform="translate(-0.2,0.7)"><rect x="5.5" y="7.2" width="9" height="1.6" fill="#fff" opacity="0.9"/></g><text x="9.8" y="21.3" font-size="3.3" text-anchor="middle" fill="#222" font-weight="bold" font-family="Liberation Sans">香烟代购</text></svg>
<div class="t td" style="left:103px;top:12px">导航8</div>
<div class="t td" style="left:237px;top:10.5px;font-size:15.5px;letter-spacing:-0.3px">Product.aspx</div>
<div class="t td" style="left:465px;top:12px;color:#00a65a">首页导航</div>
<div class="t td" style="left:626px;top:11px;font-size:15px;color:#888">8</div>
<div class="abs chk" style="left:676px;top:10px"><svg width="20" height="20" viewBox="0 0 20 20"><path d="M5.5 10.2 L8.6 13.2 L14.5 7.3" fill="none" stroke="#fff" stroke-width="2"/></svg></div>
<div class="abs btn" style="left:774px;top:9px;width:52px;background:#6c7b8b"><svg class="abs" style="left:6px;top:5px" width="12" height="12" viewBox="0 0 12 12"><path d="M6 0.5 L11.5 6 L9.6 7.9 L7.5 5.8 V11.5 H4.5 V5.8 L2.4 7.9 L0.5 6Z" fill="#fff"/></svg><span class="bt" style="left:21px">上移</span></div>
<div class="abs btn" style="left:830px;top:9px;width:51px;background:#6c7b8b"><svg class="abs" style="left:6px;top:5px" width="12" height="12" viewBox="0 0 12 12"><path d="M6 11.5 L11.5 6 L9.6 4.1 L7.5 6.2 V0.5 H4.5 V6.2 L2.4 4.1 L0.5 6Z" fill="#fff"/></svg><span class="bt" style="left:21px">下移</span></div>
<div class="abs btn" style="left:885px;top:9px;width:53px;background:#1f88d9"><svg class="abs" style="left:6px;top:5px" width="13" height="12" viewBox="0 0 13 12"><path d="M2.6 1.7 H1 V9.9 H9.1 V7.6" fill="none" stroke="#fff" stroke-width="1.1"/><path d="M3.6 8.4 L4.2 6.2 L9.6 0.9 L11.6 2.7 L6.1 8Z" fill="#fff"/></svg><span class="bt" style="left:22px">修改</span></div>
<div class="abs btn" style="left:942px;top:9px;width:49px;background:#dd4b39"><svg class="abs" style="left:5px;top:6px" width="10" height="10" viewBox="0 0 10 10"><path d="M0.8 2.6 L2.6 0.8 L5 3.2 L7.4 0.8 L9.2 2.6 L6.8 5 L9.2 7.4 L7.4 9.2 L5 6.8 L2.6 9.2 L0.8 7.4 L3.2 5Z" fill="#fff"/></svg><span class="bt" style="left:19px">删除</span></div>
</div>
<div class="abs" style="left:15px;top:472px;width:1278px;height:1px;background:#f4f4f4"></div>
<div class="abs row" style="top:473px">
<svg class="abs" style="left:46px;top:9px" width="20" height="24" viewBox="0 0 20 24"><circle cx="9.8" cy="8.2" r="7.6" fill="#5c3a3e"/><g transform="translate(-0.2,0.7)"><path d="M9.3 3.5 h1.4 v2.2 Q12 6.5 12 8 V11.8 H8 V8 Q8 6.5 9.3 5.7Z" fill="#fff"/><circle cx="6.5" cy="6" r="0.4" fill="#d8b050"/><circle cx="13.5" cy="9" r="0.4" fill="#d8b050"/></g><text x="9.8" y="21.3" font-size="3.8" text-anchor="middle" fill="#222" font-weight="bold" font-family="Liberation Sans">粮油</text></svg>
<div class="t td" style="left:103px;top:12px">导航9</div>
<div class="t td" style="left:237px;top:10.5px;font-size:15.5px;letter-spacing:-0.3px">Product.aspx</div>
<div class="t td" style="left:465px;top:12px;color:#00a65a">首页导航</div>
<div class="t td" style="left:626px;top:11px;font-size:15px;color:#888">9</div>
<div class="abs chk" style="left:676px;top:10px"><svg width="20" height="20" viewBox="0 0 20 20"><path d="M5.5 10.2 L8.6 13.2 L14.5 7.3" fill="none" stroke="#fff" stroke-width="2"/></svg></div>
<div class="abs btn" style="left:774px;top:9px;width:52px;background:#6c7b8b"><svg class="abs" style="left:6px;top:5px" width="12" height="12" viewBox="0 0 12 12"><path d="M6 0.5 L11.5 6 L9.6 7.9 L7.5 5.8 V11.5 H4.5 V5.8 L2.4 7.9 L0.5 6Z" fill="#fff"/></svg><span class="bt" style="left:21px">上移</span></div>
<div class="abs btn" style="left:830px;top:9px;width:51px;background:#6c7b8b"><svg class="abs" style="left:6px;top:5px" width="12" height="12" viewBox="0 0 12 12"><path d="M6 11.5 L11.5 6 L9.6 4.1 L7.5 6.2 V0.5 H4.5 V6.2 L2.4 4.1 L0.5 6Z" fill="#fff"/></svg><span class="bt" style="left:21px">下移</span></div>
<div class="abs btn" style="left:885px;top:9px;width:53px;background:#1f88d9"><svg class="abs" style="left:6px;top:5px" width="13" height="12" viewBox="0 0 13 12"><path d="M2.6 1.7 H1 V9.9 H9.1 V7.6" fill="none" stroke="#fff" stroke-width="1.1"/><path d="M3.6 8.4 L4.2 6.2 L9.6 0.9 L11.6 2.7 L6.1 8Z" fill="#fff"/></svg><span class="bt" style="left:22px">修改</span></div>
<div class="abs btn" style="left:942px;top:9px;width:49px;background:#dd4b39"><svg class="abs" style="left:5px;top:6px" width="10" height="10" viewBox="0 0 10 10"><path d="M0.8 2.6 L2.6 0.8 L5 3.2 L7.4 0.8 L9.2 2.6 L6.8 5 L9.2 7.4 L7.4 9.2 L5 6.8 L2.6 9.2 L0.8 7.4 L3.2 5Z" fill="#fff"/></svg><span class="bt" style="left:19px">删除</span></div>
</div>
<div class="abs" style="left:15px;top:514px;width:1278px;height:1px;background:#f4f4f4"></div>
<div class="abs row" style="top:515px">
<svg class="abs" style="left:46px;top:9px" width="20" height="24" viewBox="0 0 20 24"><circle cx="9.8" cy="8.2" r="7.6" fill="#b32a2a"/><g transform="translate(-0.2,0.7)"><circle cx="10" cy="7.5" r="4.3" fill="none" stroke="#f2c0c0" stroke-width="0.7"/><path d="M10 4.8 L12.6 7.5 L10 10.2 L7.4 7.5Z" fill="none" stroke="#f2c0c0" stroke-width="0.7"/></g><text x="9.8" y="21.3" font-size="3.3" text-anchor="middle" fill="#222" font-weight="bold" font-family="Liberation Sans">土特产</text></svg>
<div class="t td" style="left:103px;top:12px">导航10</div>
<div class="t td" style="left:237px;top:10.5px;font-size:15.5px;letter-spacing:-0.3px">Product.aspx</div>
<div class="t td" style="left:465px;top:12px;color:#00a65a">首页导航</div>
<div class="t td" style="left:626px;top:11px;font-size:15px;color:#888">10</div>
<div class="abs chk" style="left:676px;top:10px"><svg width="20" height="20" viewBox="0 0 20 20"><path d="M5.5 10.2 L8.6 13.2 L14.5 7.3" fill="none" stroke="#fff" stroke-width="2"/></svg></div>
<div class="abs btn" style="left:774px;top:9px;width:52px;background:#6c7b8b"><svg class="abs" style="left:6px;top:5px" width="12" height="12" viewBox="0 0 12 12"><path d="M6 0.5 L11.5 6 L9.6 7.9 L7.5 5.8 V11.5 H4.5 V5.8 L2.4 7.9 L0.5 6Z" fill="#fff"/></svg><span class="bt" style="left:21px">上移</span></div>
<div class="abs btn" style="left:830px;top:9px;width:51px;background:#6c7b8b"><svg class="abs" style="left:6px;top:5px" width="12" height="12" viewBox="0 0 12 12"><path d="M6 11.5 L11.5 6 L9.6 4.1 L7.5 6.2 V0.5 H4.5 V6.2 L2.4 4.1 L0.5 6Z" fill="#fff"/></svg><span class="bt" style="left:21px">下移</span></div>
<div class="abs btn" style="left:885px;top:9px;width:53px;background:#1f88d9"><svg class="abs" style="left:6px;top:5px" width="13" height="12" viewBox="0 0 13 12"><path d="M2.6 1.7 H1 V9.9 H9.1 V7.6" fill="none" stroke="#fff" stroke-width="1.1"/><path d="M3.6 8.4 L4.2 6.2 L9.6 0.9 L11.6 2.7 L6.1 8Z" fill="#fff"/></svg><span class="bt" style="left:22px">修改</span></div>
<div class="abs btn" style="left:942px;top:9px;width:49px;background:#dd4b39"><svg class="abs" style="left:5px;top:6px" width="10" height="10" viewBox="0 0 10 10"><path d="M0.8 2.6 L2.6 0.8 L5 3.2 L7.4 0.8 L9.2 2.6 L6.8 5 L9.2 7.4 L7.4 9.2 L5 6.8 L2.6 9.2 L0.8 7.4 L3.2 5Z" fill="#fff"/></svg><span class="bt" style="left:19px">删除</span></div>
</div>
</div>
<div id="footer" class="abs">
  <div class="t" style="left:15px;top:18px;font-size:14px;color:#444;letter-spacing:0.15px"><b style="color:#333">Copyright © 2021 <span style="color:#3c8dbc">MojoCube</span>.</b> All rights reserved.</div>
  <div class="t" style="right:10px;top:19px;font-size:14px;color:#444">2021年07月03日, 星期六</div>
</div>
</body></html>
